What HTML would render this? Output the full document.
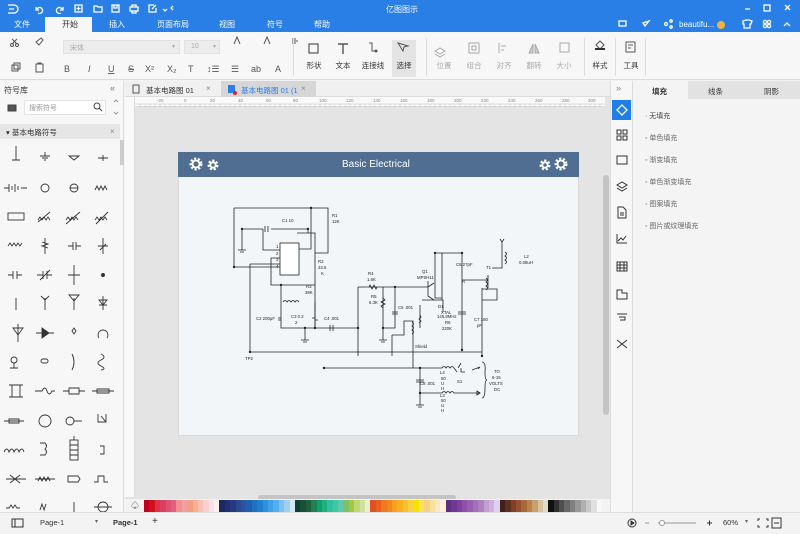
<!DOCTYPE html>
<html><head><meta charset="utf-8"><style>
*{box-sizing:border-box;margin:0;padding:0}
body{width:800px;height:534px;overflow:hidden;position:relative;background:#f3f3f3;font-family:"Liberation Sans","Noto Sans CJK SC",sans-serif;font-size:8px;color:#333}
.a{position:absolute}
.t{position:absolute;white-space:nowrap}
#top{left:0;top:0;width:800px;height:32px;background:#2a7fe6}
.menu{top:19px;color:#fff;font-size:8px}
#ribbon{left:0;top:32px;width:800px;height:48px;background:#f7f7f7;border-bottom:1px solid #dcdcdc}
.lb{font-size:7.5px;color:#333;text-align:center;width:30px}
.gr{color:#aaa}
.sep{position:absolute;top:38px;width:1px;height:38px;background:#ddd}
.sw{display:inline-block;width:5.4px;height:12px}
</style></head><body>
<div id="top" class="a"></div>
<svg class="a" style="left:0;top:0" width="800" height="32">
<g fill="none" stroke="#fff" stroke-width="1.3">
<path d="M8,5 h6 a4,4 0 0 1 0,8 h-6 M9,9 h5"/>
<path d="M37,9 a3,3 0 1 1 1,4 M36,7 v3 h3"/>
<path d="M62,9 a3,3 0 1 0 -1,4 M63,7 v3 h-3"/>
<rect x="75" y="5" width="7" height="7"/><path d="M78.5,6.5v4M76.5,8.5h4"/>
<path d="M94,6 h3 l1,1 h4 v5 h-8z"/>
<rect x="112" y="5" width="7" height="7"/><path d="M114,5v3h3v-3"/>
<rect x="130" y="7" width="8" height="4"/><path d="M132,7v-2h4v2M132,11v2h4v-2"/>
<path d="M154,5 h-5 v7 h7 v-4 M152,9 l4,-4"/>
<path d="M163,9 l2,2 l2,-2" /><path d="M173,6 l-2,2 l2,2 M171,9 h0"/>
<path d="M745,9 h5"/><rect x="764" y="5" width="6" height="6"/><path d="M785,5 l5,5 M790,5 l-5,5"/>
<rect x="619" y="21" width="7" height="5"/><path d="M645,26 l4,-5 l-6,2z"/>
<circle cx="666" cy="24" r="1.5"/><circle cx="671" cy="21" r="1.2"/><circle cx="671" cy="27" r="1.2"/>
<path d="M743,21 l3,-1 h3 l3,1 l-1,3 h-1 v4 h-6 v-4 h-1z"/>
<circle cx="765" cy="22" r="1.6"/><circle cx="769" cy="22" r="1.6"/><circle cx="765" cy="26" r="1.6"/><circle cx="769" cy="26" r="1.6"/>
<path d="M784,26 l3,-3 l3,3"/>
</g>
<circle cx="721" cy="25" r="4" fill="#f2b13a"/>
</svg>
<div class="t" style="left:386px;top:4px;color:#fff;font-size:8px">亿图图示</div>
<div class="t" style="left:679px;top:20px;color:#fff;font-size:8px">beautifu...</div>
<div class="a" style="left:45px;top:17px;width:47px;height:15px;background:#f7f7f7"></div>
<div class="t menu" style="left:14px">文件</div>
<div class="t menu" style="left:62px;color:#333">开始</div>
<div class="t menu" style="left:109px">插入</div>
<div class="t menu" style="left:157px">页面布局</div>
<div class="t menu" style="left:219px">视图</div>
<div class="t menu" style="left:267px">符号</div>
<div class="t menu" style="left:314px">帮助</div>

<div id="ribbon" class="a"></div>
<div class="a" style="left:63px;top:40px;width:117px;height:14px;background:#ececec;border:1px solid #e2e2e2"></div>
<div class="t gr" style="left:70px;top:43px;font-size:7px">宋体</div>
<div class="t gr" style="left:172px;top:43px;font-size:6px">▾</div>
<div class="a" style="left:184px;top:40px;width:36px;height:14px;background:#ececec;border:1px solid #e2e2e2"></div>
<div class="t gr" style="left:191px;top:43px;font-size:7px">10</div>
<div class="t gr" style="left:213px;top:43px;font-size:6px">▾</div>
<div class="a" style="left:392px;top:40px;width:24px;height:37px;background:#e4e4e4"></div>
<svg class="a" style="left:0;top:32px" width="800" height="48">
<g fill="none" stroke="#555" stroke-width="1">
<path d="M12,12 l5,-5 M17,12 l-5,-5"/><circle cx="12" cy="13" r="1.5"/><circle cx="17" cy="13" r="1.5"/>
<path d="M36,10 l5,-4 l2,2 l-4,5z"/>
<rect x="12" y="33" width="6" height="6"/><rect x="14" y="31" width="6" height="6"/>
<rect x="36" y="32" width="7" height="8"/><path d="M38,32v-1h3v1"/>
<path d="M234,12 l3,-7 l3,7 M264,12 l3,-7 l3,7"/>
<path d="M292,9h6M292,11h4M292,7h4"/>
<rect x="309" y="12" width="9" height="9" stroke-width="1.2"/>
<path d="M338,12h10M343,12v10" stroke-width="1.4"/>
<path d="M369,11h3v8h4" /><circle cx="376" cy="19" r="1" fill="#555"/>
<path d="M398,11 l10,3 l-4,1 l-1,4z"/>
<path d="M435,19 l5,-3 l5,3 l-5,3z M435,22 l5,3 l5,-3" stroke="#aaa"/>
<rect x="469" y="11" width="10" height="10" stroke="#aaa"/><rect x="472" y="14" width="4" height="4" stroke="#aaa"/>
<path d="M499,11v10M501,14h5M501,18h3" stroke="#aaa"/>
<path d="M529,21 l4,-9 v9z M535,12 l4,9 h-4z" stroke="#aaa" fill="#ccc"/>
<rect x="560" y="11" width="9" height="9" stroke="#aaa"/>
<path d="M596,13 l4,-4 l4,4 l-4,4z"/><path d="M595,17h10" stroke="#333" stroke-width="2"/>
<rect x="626" y="10" width="9" height="10"/><path d="M628,13h5M628,16h3"/>
</g>
<g fill="#555" font-size="9" font-family="Liberation Sans">
<text x="64" y="40">B</text><text x="88" y="40" font-style="italic">I</text><text x="108" y="40" text-decoration="underline">U</text><text x="128" y="40" text-decoration="line-through">S</text>
<text x="145" y="40">X²</text><text x="167" y="40">X₂</text><text x="188" y="40">T</text><text x="207" y="40">↕☰</text><text x="231" y="40">☰</text><text x="251" y="40">ab</text><text x="275" y="40">A</text>
</g>
</svg>
<div class="sep" style="left:293px"></div><div class="sep" style="left:426px"></div><div class="sep" style="left:584px"></div><div class="sep" style="left:615px"></div><div class="sep" style="left:645px"></div>
<div class="t lb" style="left:299px;top:60px">形状</div>
<div class="t lb" style="left:328px;top:60px">文本</div>
<div class="t lb" style="left:358px;top:60px">连接线</div>
<div class="t lb" style="left:389px;top:60px">选择</div>
<div class="t lb gr" style="left:429px;top:60px">位置</div>
<div class="t lb gr" style="left:459px;top:60px">组合</div>
<div class="t lb gr" style="left:489px;top:60px">对齐</div>
<div class="t lb gr" style="left:519px;top:60px">翻转</div>
<div class="t lb gr" style="left:549px;top:60px">大小</div>
<div class="t lb" style="left:585px;top:60px">样式</div>
<div class="t lb" style="left:616px;top:60px">工具</div>

<div class="a" style="left:0;top:81px;width:124px;height:431px;background:#f7f7f7;border-right:1px solid #ddd"></div>
<div class="t" style="left:4px;top:85px;font-size:8px">符号库</div>
<div class="t" style="left:110px;top:83px;font-size:9px;color:#777">«</div>
<div class="a" style="left:24px;top:100px;width:82px;height:15px;background:#fff;border:1px solid #e4e4e4"></div>
<div class="t" style="left:29px;top:103px;font-size:7px;color:#999">搜索符号</div>
<svg class="a" style="left:0;top:98px" width="124" height="20"><g fill="none" stroke="#444"><rect x="8" y="7" width="8" height="6" fill="#555"/><circle cx="97" cy="8" r="3"/><path d="M99,10l3,3"/><path d="M114,4l2,-2l2,2M114,14l2,2l2,-2" stroke="#999"/></g></svg>
<div class="a" style="left:0;top:124px;width:120px;height:15px;background:#e6e6e6"></div>
<div class="t" style="left:6px;top:127px;font-size:7.5px">▾ 基本电路符号</div>
<div class="t" style="left:110px;top:127px;font-size:8px;color:#888">×</div>
<div class="a" style="left:120px;top:140px;width:4px;height:25px;background:#ccc"></div>
<svg class="a" style="left:0;top:140px" width="120" height="372">
<g fill="none" stroke="#333" stroke-width="0.9">
<path d="M16,6v14M12,20h8"/><path d="M40,16h10M42,18h6M44,20h2M45,12v4"/><path d="M69,16h10l-5,4z"/><path d="M98,18h10M103,15v6"/>
<path d="M4,48h5M9,44v8M12,46v4M15,44v8M18,46v4M21,48h6"/><circle cx="45" cy="48" r="4"/><circle cx="74" cy="48" r="4"/><path d="M70,48h8"/><path d="M95,50l2,-4l2,4l2,-4l2,4l2,-4l2,4"/>
<rect x="8" y="73" width="16" height="7"/><path d="M38,80l2,-3l2,3l2,-3l2,3l2,-3l2,3M38,82l12,-10"/><path d="M66,80l2,-3l2,3l2,-3l2,3l2,-3l2,3M66,84l14,-12"/><path d="M95,80l2,-3l2,3l2,-3l2,3l2,-3l2,3M96,84l12,-12"/>
<path d="M8,106l2,-3l2,3l2,-3l2,3l2,-3l2,3l2,-3"/><path d="M45,98v16M42,102l6,2l-6,2l6,2"/><path d="M68,106h5M73,102v8M76,102v8M76,106h5"/><path d="M103,98v16M98,106h10M100,110l6,-6"/>
<path d="M8,135h5M13,131v8M17,131v8M17,135h5"/><path d="M37,135h6M43,131v8M47,131v8M47,135h5M40,140l10,-10"/><path d="M74,125v20M68,135h12"/><circle cx="103" cy="135" r="1.5" fill="#333"/>
<path d="M16,158v12"/><path d="M45,158v12M41,156l4,4l4,-4"/><path d="M74,158v12M69,155h10l-5,6z"/><path d="M103,156v14M99,160h8l-4,5z M99,165h8"/>
<path d="M18,184v18M13,188h10l-5,7z" /><path d="M36,193h18M42,188v10l7,-5z" fill="#333"/><path d="M74,188l2,3l-2,3l-2,-3z"/><path d="M99,198a5,5 0 1 1 8,0"/>
<circle cx="14" cy="220" r="3"/><path d="M14,223v5M10,228h8"/><rect x="41" y="219" width="7" height="4" rx="2"/><path d="M72,214q4,8 0,16"/><path d="M101,214q6,3 0,6q-6,3 0,6q6,3 0,4"/>
<rect x="12" y="245" width="8" height="12"/><path d="M9,245h14M9,257h14"/><path d="M35,251h7q3,-6 5,0q2,6 5,0h3"/><path d="M63,251h6M69,248h10v6h-10zM79,251h6"/><path d="M92,251h22M97,249h12v4h-12z"/>
<path d="M4,281h20M9,279h10v4h-10z"/><circle cx="45" cy="281" r="6"/><circle cx="70" cy="281" r="4"/><path d="M74,281h8"/><path d="M98,274v8h8v-8M101,276l5,6"/>
<path d="M4,312q3,-6 5,0q3,-6 5,0q3,-6 5,0q3,-6 5,0"/><path d="M40,303h5q3,3 0,6q3,3 0,6h-5"/><rect x="70" y="300" width="8" height="20"/><path d="M70,305h8M70,310h8M70,315h8M74,296v4"/><path d="M100,306h4v8h-4"/>
<path d="M6,339h20M10,335l10,8M10,343l10,-8"/><path d="M35,339h20M38,341l2,-4l2,4l2,-4l2,4l2,-4l2,4"/><path d="M68,336h10l2,3l-2,3h-10z"/><path d="M94,342h4v-6h6v6h4"/>
<path d="M6,368h3l2,-3l2,3l2,-3l2,3h3"/><path d="M40,370l2,-6l2,6l2,-6"/><path d="M74,362v10"/><circle cx="103" cy="367" r="5"/><path d="M94,367h18"/>
</g>
</svg>

<div class="a" style="left:125px;top:81px;width:485px;height:16px;background:#f0f0f0;border-bottom:1px solid #ddd"></div>
<div class="a" style="left:221px;top:81px;width:95px;height:16px;background:#d6d6d6"></div>
<svg class="a" style="left:130px;top:82px" width="120" height="14"><rect x="3" y="3" width="6" height="8" fill="none" stroke="#555"/></svg>
<svg class="a" style="left:226px;top:82px" width="20" height="14"><rect x="2" y="3" width="7" height="8" fill="#2a7fe6"/><circle cx="9" cy="11" r="2" fill="#d22"/></svg>
<div class="t" style="left:146px;top:85px;font-size:7.5px">基本电路图 01</div>
<div class="t" style="left:206px;top:84px;font-size:8px;color:#888">×</div>
<div class="t" style="left:241px;top:85px;font-size:7.5px;color:#2a7fe6">基本电路图 01 (1</div>
<div class="t" style="left:301px;top:84px;font-size:8px;color:#888">×</div>

<div class="a" style="left:125px;top:97px;width:485px;height:415px;background:#e4e4e4"></div>
<div class="a" style="left:135px;top:97px;width:470px;height:10px;background:#f9f9f9;border-bottom:1px solid #ddd"></div>
<div class="a" style="left:125px;top:97px;width:10px;height:400px;background:#f9f9f9;border-right:1px solid #ddd"></div>
<svg class="a" style="left:125px;top:97px" width="485" height="400">
<g stroke="#bbb" stroke-width="0.5">
<path d="M10,7h470M15,7v3M20,8v2M25,7v3M30,8v2M35,7v3M40,8v2M45,7v3M50,8v2M55,7v3M60,8v2M65,7v3M70,8v2M75,7v3M80,8v2M85,7v3M90,8v2M95,7v3M100,8v2M105,7v3M110,8v2M115,7v3M120,8v2M125,7v3M130,8v2M135,7v3M140,8v2M145,7v3M150,8v2M155,7v3M160,8v2M165,7v3M170,8v2M175,7v3M180,8v2M185,7v3M190,8v2M195,7v3M200,8v2M205,7v3M210,8v2M215,7v3M220,8v2M225,7v3M230,8v2M235,7v3M240,8v2M245,7v3M250,8v2M255,7v3M260,8v2M265,7v3M270,8v2M275,7v3M280,8v2M285,7v3M290,8v2M295,7v3M300,8v2M305,7v3M310,8v2M315,7v3M320,8v2M325,7v3M330,8v2M335,7v3M340,8v2M345,7v3M350,8v2M355,7v3M360,8v2M365,7v3M370,8v2M375,7v3M380,8v2M385,7v3M390,8v2M395,7v3M400,8v2M405,7v3M410,8v2M415,7v3M420,8v2M425,7v3M430,8v2M435,7v3M440,8v2M445,7v3M450,8v2M455,7v3M460,8v2M465,7v3M470,8v2M475,7v3"/>
</g>
<g fill="#888" font-size="4.5" font-family="Liberation Sans">
<text x="32" y="5">-20</text><text x="59" y="5">0</text><text x="85" y="5">20</text><text x="113" y="5">40</text><text x="141" y="5">60</text><text x="168" y="5">80</text><text x="194" y="5">100</text><text x="221" y="5">120</text><text x="248" y="5">140</text><text x="275" y="5">160</text><text x="302" y="5">180</text><text x="329" y="5">200</text><text x="356" y="5">220</text><text x="383" y="5">240</text><text x="410" y="5">260</text><text x="437" y="5">280</text><text x="463" y="5">300</text>
</g>
</svg>
<div class="a" style="left:603px;top:175px;width:6px;height:240px;background:#c4c4c4;border-radius:3px"></div>
<div class="a" style="left:258px;top:495px;width:198px;height:5px;background:#c4c4c4;border-radius:3px"></div>

<div class="a" style="left:178px;top:152px;width:401px;height:284px;background:#f3f6f9;border:1px solid #d8d8d8"></div>
<div class="a" style="left:178px;top:152px;width:401px;height:25px;background:#4f6e91"></div>
<div class="t" style="left:342px;top:159px;color:#fff;font-size:10px">Basic Electrical</div>
<svg class="a" style="left:0;top:0" width="800" height="534">
<g fill="none" stroke="#fff" stroke-width="3" stroke-dasharray="2 1.6">
<circle cx="196" cy="164" r="5"/><circle cx="213" cy="165" r="4"/><circle cx="545" cy="165" r="4"/><circle cx="561" cy="164" r="5"/>
</g>
<g fill="none" stroke="#fff" stroke-width="1.8">
<circle cx="196" cy="164" r="3.5"/><circle cx="213" cy="165" r="2.7"/><circle cx="545" cy="165" r="2.7"/><circle cx="561" cy="164" r="3.5"/>
</g>
<g fill="none" stroke="#222" stroke-width="0.8">
<path d="M234,208H311V249H299"/>
<path d="M311,208H328V253H315"/>
<path d="M242,229H263M271,229H308V233"/><path d="M265,226v6M268,226v6"/>
<path d="M242,229V250M238,250h8M240,252h4"/>
<path d="M263,229V250H280"/>
<path d="M234,208V267H280"/>
<path d="M250,264H280M250,264V352H482"/>
<rect x="280" y="243" width="19" height="32" fill="#fff"/>
<path d="M271,258H280M271,258V285H315M297,233H315V328"/>
<path d="M281,285V328H358M315,302V328"/>
<path d="M283,302q2,-3 4,0q2,-3 4,0q2,-3 4,0q2,-3 4,0"/>
<path d="M305,328V340M301,340h8M303,342h4"/>
<path d="M281,318h-3M281,320h-3M315,318h-3M315,320h3"/>
<path d="M330,325v6M333,325v6"/>
<path d="M358,287V356M358,287H428"/>
<path d="M369,287l1,-2l2,4l2,-4l2,4l1,-2"/>
<path d="M383,287V328H395V287M383,328V340M379,340h8M381,342h4"/>
<path d="M383,298l2,2l-4,2l4,2l-4,2l2,2"/>
<path d="M392,312h6M392,314h6"/>
<path d="M435,253V298H442M435,253H462V350M442,253V300"/>
<path d="M428,281V296l6,4M428,287l6,-4"/>
<path d="M422,300H443V312M420,305V328"/>
<path d="M420,315l1,2l-2,2l2,2l-2,2"/>
<path d="M462,280H487M458,312h8M458,314h8"/>
<path d="M482,288V356M482,289H497V300H482M488,288V275"/>
<path d="M486,278q3,2 0,4q3,2 0,4q3,2 0,4"/>
<path d="M502,242V268H492M502,242l-2,-3M502,242l2,-3"/>
<path d="M505,252q3,2 0,4q3,2 0,4q3,2 0,4"/>
<path d="M392,335V356M392,335H404V321H413V368"/>
<path d="M412,322q3,2 0,4q3,2 0,4q3,2 0,4"/>
<path d="M324,368H420M420,368H442M442,368q2,-3 4,0q2,-3 4,0q2,-3 4,0l3,4M458,368l3,-5M461,368v4H465"/>
<path d="M420,368V405M416,405h8M418,407h4M416,380h8M416,382h8"/>
<path d="M420,393H442q2,-3 4,0q2,-3 4,0q2,-3 4,0H480"/>
<path d="M472,370l8,-3M480,367l-2,2M480,393l-3,-2l0,4z"/>
<path d="M482,362q4,0 3,10q0,8 2,8q-2,0 -2,8q0,10 -3,10"/>
</g>
<g fill="#222">
<circle cx="311" cy="208" r="1.2"/><circle cx="242" cy="229" r="1.2"/><circle cx="234" cy="267" r="1.2"/><circle cx="281" cy="285" r="1.2"/><circle cx="305" cy="328" r="1.2"/><circle cx="315" cy="328" r="1.2"/><circle cx="358" cy="328" r="1.2"/><circle cx="395" cy="287" r="1.2"/><circle cx="383" cy="328" r="1.2"/><circle cx="435" cy="253" r="1.2"/><circle cx="462" cy="253" r="1.2"/><circle cx="462" cy="350" r="1.2"/><circle cx="482" cy="356" r="1.2"/><circle cx="250" cy="352" r="1.2"/><circle cx="324" cy="368" r="1.2"/><circle cx="420" cy="368" r="1.2"/><circle cx="420" cy="393" r="1.2"/><circle cx="308" cy="229" r="1.2"/>
</g>
<g fill="#222" font-size="4.3" font-family="Liberation Sans">
<text x="282" y="222">C1 10</text><text x="332" y="217">R1</text><text x="332" y="223">12K</text>
<text x="276" y="248">1</text><text x="276" y="255">2</text><text x="276" y="261">3</text><text x="276" y="268">4</text>
<text x="318" y="263">R2</text><text x="318" y="269">33.6</text><text x="321" y="275">K</text>
<text x="306" y="288">R3</text><text x="305" y="294">39K</text>
<text x="256" y="320">C2 200μF</text><text x="291" y="318">C3 0.2</text><text x="295" y="324">2</text><text x="324" y="320">C4 .001</text>
<text x="245" y="360">TP2</text>
<text x="368" y="275">R4</text><text x="367" y="281">1.6K</text><text x="371" y="298">R5</text><text x="369" y="304">6.3K</text><text x="398" y="309">C5 .001</text>
<text x="422" y="273">Q1</text><text x="417" y="279">MPSH11</text><text x="456" y="266">C6 27pF</text><text x="462" y="283">R</text>
<text x="486" y="269">T1</text><text x="524" y="258">L2</text><text x="519" y="264">0.08uH</text>
<text x="438" y="308">D1</text><text x="441" y="314">XTAL</text><text x="437" y="318">145.8MHz</text><text x="445" y="324">R6</text><text x="442" y="330">220K</text>
<text x="474" y="321">C7 180</text><text x="477" y="327">pF</text><text x="415" y="348">Shield</text>
<text x="420" y="385">C8 .001</text><text x="440" y="374">L4</text><text x="441" y="380">50</text><text x="441" y="385">U</text><text x="441" y="390">H</text>
<text x="440" y="397">L3</text><text x="441" y="402">50</text><text x="441" y="407">U</text><text x="441" y="412">H</text>
<text x="457" y="383">S1</text><text x="494" y="373">TO</text><text x="492" y="379">6-15</text><text x="489" y="385">VOLTS</text><text x="494" y="391">DC</text>
</g>
</svg>

<div class="a" style="left:610px;top:81px;width:23px;height:431px;background:#f7f7f7;border-left:1px solid #ddd;border-right:1px solid #ddd"></div>
<div class="t" style="left:616px;top:83px;font-size:9px;color:#888">»</div>
<div class="a" style="left:612px;top:100px;width:19px;height:20px;background:#1e7fe8"></div>
<svg class="a" style="left:612px;top:100px" width="20" height="260">
<g fill="none" stroke="#fff" stroke-width="1.3"><path d="M5,10l5,-5l5,5l-5,5z"/></g>
<g fill="none" stroke="#333" stroke-width="1">
<rect x="5" y="30" width="4" height="4"/><rect x="11" y="30" width="4" height="4"/><rect x="5" y="36" width="4" height="4"/><rect x="11" y="36" width="4" height="4"/>
<rect x="5" y="56" width="10" height="8"/>
<path d="M5,85l5,-3l5,3l-5,3z M5,88l5,3l5,-3"/>
<path d="M6,107h5l3,3v8h-8z M8,113h4M8,115h4"/>
<path d="M5,134v9h10M6,141l3,-3l2,2l3,-4"/>
<rect x="5" y="162" width="10" height="9"/><path d="M5,165h10M5,168h10M8,162v9M12,162v9"/>
<path d="M5,190h5v3h5v6h-10z"/>
<path d="M5,214h10M7,217h6v3h-5"/>
<path d="M5,240l10,8M15,240l-10,8"/>
</g>
</svg>

<div class="a" style="left:633px;top:81px;width:167px;height:431px;background:#f4f4f4"></div>
<div class="a" style="left:688px;top:81px;width:112px;height:18px;background:#e2e2e2"></div>
<div class="t" style="left:652px;top:86px;font-size:7.5px;font-weight:bold">填充</div>
<div class="t" style="left:708px;top:86px;font-size:7.5px">线条</div>
<div class="t" style="left:764px;top:86px;font-size:7.5px">阴影</div>
<div class="t" style="left:645px;top:111px;font-size:7px;color:#444">· 无填充</div>
<div class="t" style="left:645px;top:133px;font-size:7px;color:#666">◦ 单色填充</div>
<div class="t" style="left:645px;top:155px;font-size:7px;color:#666">◦ 渐变填充</div>
<div class="t" style="left:645px;top:177px;font-size:7px;color:#666">◦ 单色渐变填充</div>
<div class="t" style="left:645px;top:199px;font-size:7px;color:#666">◦ 图案填充</div>
<div class="t" style="left:645px;top:221px;font-size:7px;color:#666">◦ 图片或纹理填充</div>

<div class="a" style="left:125px;top:499px;width:485px;height:13px;background:#f3f3f3"></div>
<div class="t" style="left:131px;top:500px;font-size:8px">♤</div>
<div class="a" style="left:144px;top:500px;height:12px;white-space:nowrap;font-size:0">
<span class="sw" style="background:#c00020"></span><span class="sw" style="background:#d0101a"></span><span class="sw" style="background:#e0304a"></span><span class="sw" style="background:#d84060"></span><span class="sw" style="background:#e05070"></span><span class="sw" style="background:#e06080"></span><span class="sw" style="background:#f09090"></span><span class="sw" style="background:#f0a0a0"></span><span class="sw" style="background:#f0a080"></span><span class="sw" style="background:#f8b090"></span><span class="sw" style="background:#f8c0b0"></span><span class="sw" style="background:#f8d0d0"></span><span class="sw" style="background:#f8e0e8"></span><span class="sw" style="background:#fff0f0"></span>
<span class="sw" style="background:#1a2a60"></span><span class="sw" style="background:#203070"></span><span class="sw" style="background:#283880"></span><span class="sw" style="background:#2a4a90"></span><span class="sw" style="background:#3050a0"></span><span class="sw" style="background:#2060b0"></span><span class="sw" style="background:#2070c0"></span><span class="sw" style="background:#2080d0"></span><span class="sw" style="background:#3090e0"></span><span class="sw" style="background:#40a0e8"></span><span class="sw" style="background:#50b0f0"></span><span class="sw" style="background:#80c0f0"></span><span class="sw" style="background:#a0d0f0"></span><span class="sw" style="background:#d0e8f8"></span>
<span class="sw" style="background:#104030"></span><span class="sw" style="background:#185038"></span><span class="sw" style="background:#206040"></span><span class="sw" style="background:#208050"></span><span class="sw" style="background:#10a070"></span><span class="sw" style="background:#20b080"></span><span class="sw" style="background:#30c0a0"></span><span class="sw" style="background:#40c8a0"></span><span class="sw" style="background:#60c8b0"></span><span class="sw" style="background:#80c060"></span><span class="sw" style="background:#a0c840"></span><span class="sw" style="background:#c0d870"></span><span class="sw" style="background:#d0e0a0"></span><span class="sw" style="background:#e8f0d0"></span>
<span class="sw" style="background:#e05020"></span><span class="sw" style="background:#e86020"></span><span class="sw" style="background:#f07820"></span><span class="sw" style="background:#f08820"></span><span class="sw" style="background:#f8a020"></span><span class="sw" style="background:#f8b020"></span><span class="sw" style="background:#f8c030"></span><span class="sw" style="background:#f8d040"></span><span class="sw" style="background:#f8e000"></span><span class="sw" style="background:#f8e060"></span><span class="sw" style="background:#f8d080"></span><span class="sw" style="background:#f8e0a0"></span><span class="sw" style="background:#f8e8c0"></span><span class="sw" style="background:#fff0e0"></span>
<span class="sw" style="background:#603080"></span><span class="sw" style="background:#703890"></span><span class="sw" style="background:#8040a0"></span><span class="sw" style="background:#9050a8"></span><span class="sw" style="background:#9860b0"></span><span class="sw" style="background:#a070b8"></span><span class="sw" style="background:#b080c0"></span><span class="sw" style="background:#c0a0d0"></span><span class="sw" style="background:#d0b0e0"></span><span class="sw" style="background:#e0d0f0"></span>
<span class="sw" style="background:#402018"></span><span class="sw" style="background:#603020"></span><span class="sw" style="background:#804028"></span><span class="sw" style="background:#985030"></span><span class="sw" style="background:#a86838"></span><span class="sw" style="background:#c08048"></span><span class="sw" style="background:#c8a070"></span><span class="sw" style="background:#d8c0a0"></span><span class="sw" style="background:#e0d8c8"></span>
<span class="sw" style="background:#101010"></span><span class="sw" style="background:#303030"></span><span class="sw" style="background:#505050"></span><span class="sw" style="background:#686868"></span><span class="sw" style="background:#808080"></span><span class="sw" style="background:#989898"></span><span class="sw" style="background:#b0b0b0"></span><span class="sw" style="background:#c8c8c8"></span><span class="sw" style="background:#e0e0e0"></span><span class="sw" style="background:#f8f8f8"></span>
</div>

<div class="a" style="left:0;top:512px;width:800px;height:22px;background:#f3f3f3;border-top:1px solid #ddd"></div>
<svg class="a" style="left:0;top:512px" width="800" height="22">
<g fill="none" stroke="#333" stroke-width="1">
<rect x="12" y="7" width="11" height="8"/><path d="M15,7v8"/>
<circle cx="632" cy="11" r="4"/><path d="M631,9l3,2l-3,2z" fill="#333"/>
<path d="M645,11h4M658,11h38" stroke="#999"/><circle cx="662" cy="11" r="2.5" fill="#fff" stroke="#999"/>
<path d="M707,11h5M709.5,8.5v5"/>
<path d="M760,7h-2v2M766,7h2v2M760,15h-2v-2M766,15h2v-2"/>
<rect x="772" y="6" width="9" height="10"/><path d="M774,11h5"/>
</g>
</svg>
<div class="t" style="left:40px;top:518px;font-size:7.5px">Page-1</div>
<div class="t" style="left:95px;top:518px;font-size:6px;color:#666">▾</div>
<div class="t" style="left:113px;top:518px;font-size:7.5px;font-weight:bold">Page-1</div>
<div class="t" style="left:152px;top:516px;font-size:10px">+</div>
<div class="t" style="left:723px;top:518px;font-size:7.5px">60%</div>
<div class="t" style="left:745px;top:518px;font-size:6px;color:#666">▾</div>
</body></html>
